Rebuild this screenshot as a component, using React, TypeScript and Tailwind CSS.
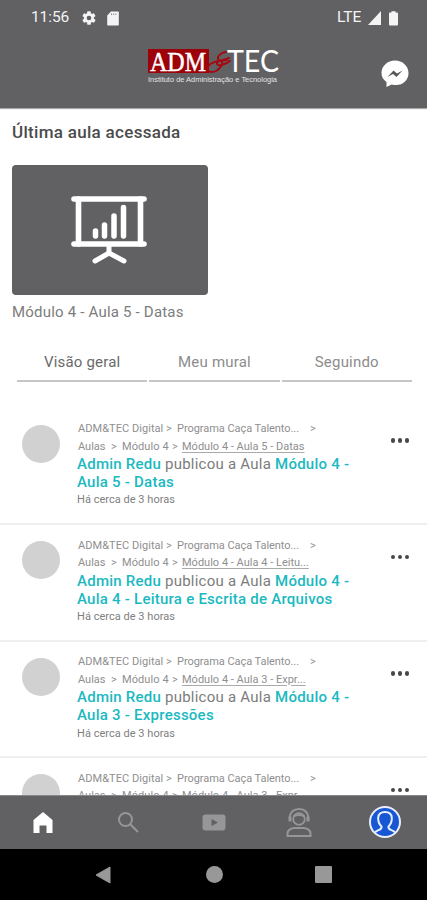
import React, { useState } from "react";

type PostType = {
  id: number;
  crumb: string;
  title: string[];
};

const posts: PostType[] = [
  { id: 1, crumb: "Módulo 4 - Aula 5 - Datas", title: ["Módulo 4 -", "Aula 5 - Datas"] },
  { id: 2, crumb: "Módulo 4 - Aula 4 - Leitu...", title: ["Módulo 4 -", "Aula 4 - Leitura e Escrita de Arquivos"] },
  { id: 3, crumb: "Módulo 4 - Aula 3 - Expr...", title: ["Módulo 4 -", "Aula 3 - Expressões"] },
  { id: 4, crumb: "Módulo 4 - Aula 3 - Expr...", title: ["Módulo 4 -", "Aula 3 - Expressões"] },
];

const tabs = ["Visão geral", "Meu mural", "Seguindo"];

const StatusBar = () => (
  <div className="flex h-9 items-center justify-between pl-[31px] pr-[29px] text-[#f4f4f4]">
    <div className="flex items-center">
      <span className="w-[50px] text-[15.5px] tracking-[-0.1px]">11:56</span>
      <svg width="16" height="16" viewBox="0 0 24 24" fill="currentColor">
        <path d="M19.4 13a7.500 7.500 0 0 0 0-2l2.100-1.650a.5.5 0 0 0 .1-.65l-2-3.450a.5.5 0 0 0-.6-.2l-2.500 1a7.300 7.300 0 0 0-1.700-1l-.4-2.650a.5.5 0 0 0-.5-.4h-4a.5.5 0 0 0-.5.4L9.100 5.050a7.300 7.300 0 0 0-1.700 1l-2.500-1a.5.5 0 0 0-.6.2l-2 3.450a.5.5 0 0 0 .1.65L4.500 11a7.500 7.500 0 0 0 0 2l-2.100 1.650a.5.5 0 0 0-.1.65l2 3.450a.5.5 0 0 0 .6.2l2.500-1a7.300 7.300 0 0 0 1.700 1l.4 2.650a.5.5 0 0 0 .5.4h4a.5.5 0 0 0 .5-.4l.4-2.650a7.300 7.300 0 0 0 1.700-1l2.500 1a.5.5 0 0 0 .6-.2l2-3.450a.5.5 0 0 0-.1-.65zM12 15.500a3.500 3.500 0 1 1 0-7 3.500 3.500 0 0 1 0 7z" />
      </svg>
      <svg className="ml-[10px]" width="12" height="15" viewBox="0 0 12 15">
        <path d="M4 .5h7q.8 0 .8.8v12.400q0 .8-.8.8H1q-.8 0-.8-.8V4.500z" fill="currentColor" />
        <path d="M4.500 2.500v1.500M6.700 2.500v1.500M8.900 2.500v1.500" stroke="#88888a" strokeWidth="1" />
      </svg>
    </div>
    <div className="flex items-center">
      <span className="w-[31px] text-[15.500px]">LTE</span>
      <svg width="13" height="14" viewBox="0 0 13 14" fill="currentColor">
        <path d="M13 0v14H0z" />
      </svg>
      <svg className="ml-2" width="9" height="15" viewBox="0 0 9 15" fill="currentColor">
        <path d="M2.500 1.500V.3h4v1.200H8q1 0 1 1v11q0 1-1 1H1q-1 0-1-1v-11q0-1 1-1z" />
      </svg>
    </div>
  </div>
);

const Logo = () => (
  <svg width="134" height="38" viewBox="0 0 134 38" className="mt-[12px]">
    <rect x="1" y="1" width="61" height="24" fill="#9c0207" />
    <text x="3" y="23" fontFamily="Liberation Serif, serif" fontSize="28" textLength="56" lengthAdjust="spacingAndGlyphs" fill="#fff" stroke="#fff" strokeWidth=".5">
      ADM
    </text>
    <path
      d="M79 4C75 4 70 8 71 11s6 1 11-1M80 12C73 12 63 14 61 19s4 6 8 4 7-7 6-9-6-1-5 2 9 0 13-3"
      fill="none"
      stroke="#a8050d"
      strokeWidth="1.900"
      strokeLinecap="round"
    />
    <text x="80" y="23.500" fontFamily="Lato, sans-serif" fontSize="30" textLength="52" lengthAdjust="spacingAndGlyphs" fill="#fff">
      TEC
    </text>
    <text x="1" y="33.500" fontFamily="Liberation Sans, sans-serif" fontSize="7.500" textLength="129" lengthAdjust="spacingAndGlyphs" fill="#e4e4e4">
      Instituto de Administração e Tecnologia
    </text>
  </svg>
);

const BoardIcon = () => (
  <svg width="78" height="70" viewBox="0 0 78 70" fill="none" stroke="#fff" strokeLinecap="round" className="-ml-[2px]">
    <path d="M4 4h70M4 49h70" strokeWidth="5.600" />
    <path d="M8.500 4v45M70.500 4v45" strokeWidth="5.600" />
    <path d="M39 50v8M25 66l14-8 15 8" strokeWidth="5" strokeLinejoin="round" />
    <path d="M25.500 36v5M34.500 30v11M44 21v20M53.500 12.500V41" strokeWidth="5.500" />
  </svg>
);

const Post = ({ post }: { post: PostType }) => (
  <div className="flex h-[116.600px] shrink-0 items-start border-b-2 border-[#efefef] pl-[22px] pr-[17px] pt-[11.500px]">
    <div className="mt-[4.500px] h-[38px] w-[38px] shrink-0 rounded-full bg-[#d1d1d1]" />
    <div className="ml-[18px] w-[290px] shrink-0 whitespace-nowrap">
      <div className="text-[11px] leading-[17.500px] text-[#8f8f8f]">
        <div className="flex">
          <span className="w-[88px] tracking-[0.050px]">ADM&amp;TEC Digital</span>
          <span className="w-[11px]">&gt;</span>
          <span className="w-[133px] tracking-[-0.050px]">Programa Caça Talento...</span>
          <span>&gt;</span>
        </div>
        <div className="flex">
          <span className="w-[33px]">Aulas</span>
          <span className="w-[11px]">&gt;</span>
          <span className="w-[50px] tracking-[0.080px]">Módulo 4</span>
          <span className="w-[10px]">&gt;</span>
          <span className="tracking-[0.010px] underline decoration-[#aaa] underline-offset-2">{post.crumb}</span>
        </div>
      </div>
      <p className="-ml-px text-[15px] leading-[18.200px] tracking-[0.240px] text-[#7c7c7c]">
        <span className="font-medium text-[#1bb9c0]">Admin Redu</span> publicou a Aula{" "}
        <span className="font-medium text-[#1bb9c0]">
          {post.title[0]}
          <br />
          {post.title[1]}
        </span>
      </p>
      <p className="-ml-px text-[11px] leading-[17px] tracking-[0.030px] text-[#808080]">Há cerca de 3 horas</p>
    </div>
    <div className="ml-auto mt-[18px] flex gap-[2.500px] pr-[1px]">
      <span className="h-[4.500px] w-[4.500px] rounded-full bg-[#484848]" />
      <span className="h-[4.500px] w-[4.500px] rounded-full bg-[#484848]" />
      <span className="h-[4.500px] w-[4.500px] rounded-full bg-[#484848]" />
    </div>
  </div>
);

const BottomNav = () => (
  <nav className="grid h-[54px] shrink-0 grid-cols-5 place-items-center border-t border-[#88888a] bg-[#616163] text-[#969698]">
    <svg width="22" height="24" viewBox="0 0 22 24" fill="#fff">
      <path d="M11 1 20.500 9v13H14.500V14.500h-7V22h-6V9z" />
    </svg>
    <svg width="22" height="22" viewBox="0 0 22 22" fill="none" stroke="currentColor" strokeWidth="2">
      <circle cx="8.500" cy="7.500" r="6.500" />
      <path d="m13.500 12.500 7.500 7.500" />
    </svg>
    <svg width="24" height="18" viewBox="0 0 24 18" className="ml-px">
      <rect x=".5" y=".5" width="23" height="16" rx="3" fill="currentColor" />
      <path d="m9.500 5 6.500 3.500-6.500 3.500z" fill="#616163" />
    </svg>
    <svg width="26" height="30" viewBox="0 0 26 30" fill="none" stroke="currentColor" strokeWidth="1.800">
      <circle cx="13" cy="11" r="5.800" />
      <path d="M3.500 10.500C4 4 8 1 13 1S22 4 22.500 10.500" />
      <path d="M4 8.500v5M22 8.500v5" strokeWidth="3" />
      <path d="M7.500 8.500c3-2 8-2 11 0" strokeWidth="2" />
      <path d="M1.500 28v-2.500c0-3.500 4-5.500 7-5.500h9c3 0 7 2 7 5.500V28z" strokeWidth="2" />
    </svg>
    <svg width="34" height="34" viewBox="0 0 34 34" fill="none" stroke="#e8eefc" className="ml-[2px] -mt-[2px]">
      <circle cx="17" cy="17" r="15" fill="#1757d3" strokeWidth="2" />
      <path d="M7 27.500c2-3 7.500-2 6.500-6-4-4-6-14.500 3.500-14.500s7.500 10.500 3.500 14.500c-1 4 4.500 3 6.500 6" strokeWidth="2" />
    </svg>
  </nav>
);

const App = () => {
  const [activeTab, setActiveTab] = useState(tabs[0]);

  return (
    <div className="flex h-[900px] w-[427px] flex-col overflow-hidden bg-white font-[Roboto,sans-serif]">
      <header className="relative h-[108px] shrink-0 bg-[#616163] shadow-[0_1px_1px_#aaa]">
        <StatusBar />
        <div className="flex justify-center">
          <Logo />
        </div>
        <svg className="absolute left-[381px] top-[60px]" width="28" height="28" viewBox="0 0 28 28">
          <path d="M14 .5C6.500.5.500 6 .5 13c0 3.500 1.500 6.500 5 9v5l5-2.500c10 2.500 17-3.500 17-11.500 0-7-6-12.500-13.500-12.500z" fill="#fff" />
          <path d="m6.500 17 6-6.500 3.500 3 5.500-3-6 6.500-3.500-3z" fill="#58585a" />
        </svg>
      </header>

      <main className="flex min-h-0 flex-1 flex-col overflow-hidden">
        <section className="h-[236px] shrink-0 px-3 pt-[14px]">
          <h1 className="text-[17px] font-medium leading-5 tracking-[0.300px] text-[#4b4b4b]">Última aula acessada</h1>
          <div className="mt-[23px] flex h-[130px] w-[195.500px] items-center justify-center rounded-[4px] bg-[#616163]">
            <BoardIcon />
          </div>
          <p className="mt-[7px] text-[15px] leading-5 tracking-[0.200px] text-[#7c7c7c]">Módulo 4 - Aula 5 - Datas</p>
        </section>

        <div className="grid shrink-0 grid-cols-3 gap-[2px] pl-[17px] pr-[15px]">
          {tabs.map((tab) => (
            <button
              key={tab}
              onClick={() => setActiveTab(tab)}
              className={`h-[37.500px] border-b-2 border-[#c6c6c6] pt-px text-[15px] tracking-[0.200px] ${
                tab === activeTab ? "text-[#6a6a6a]" : "text-[#8c8c8c]"
              }`}
            >
              {tab}
            </button>
          ))}
        </div>

        <div className="mt-[27px] flex flex-col">
          {posts.map((post) => (
            <Post key={post.id} post={post} />
          ))}
        </div>
      </main>

      <BottomNav />
      <div className="grid h-[51px] shrink-0 grid-cols-[95px_16px_94.500px_18px_91.500px_18px] items-center bg-black">
        <svg className="col-start-2" width="16" height="18" viewBox="0 0 16 18" fill="#989898">
          <path d="M15 1v16L1 9z" stroke="#989898" strokeLinejoin="round" />
        </svg>
        <span className="col-start-4 h-[17px] w-[17px] rounded-full bg-[#989898]" />
        <span className="col-start-6 h-[17px] w-[17px] rounded-[1px] bg-[#989898]" />
      </div>
    </div>
  );
};

export default App;
